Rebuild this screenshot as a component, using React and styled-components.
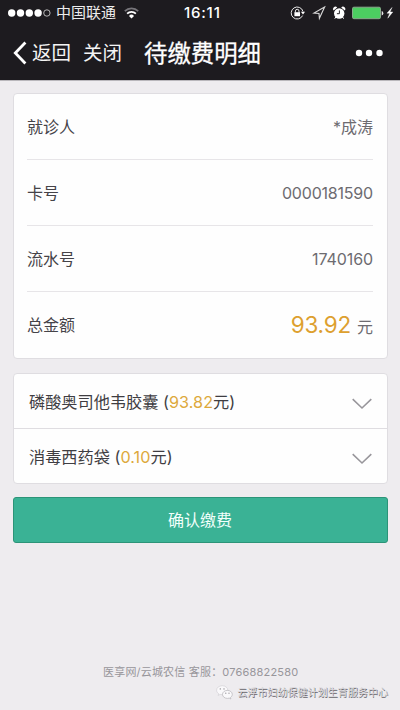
import React from 'react';
import styled, { createGlobalStyle } from 'styled-components';

const GlobalStyle = createGlobalStyle`
  * {
    box-sizing: border-box;
  }
  body {
    margin: 0;
    background: #eeecef;
    font-family: Inter, 'Noto Sans CJK SC', sans-serif;
  }
`;
const Page = styled.div`
  display: flex;
  flex-direction: column;
  width: 400px;
  height: 710px;
  overflow: hidden;
  background: #eeecef;
  white-space: nowrap;
`;
const Header = styled.header`
  height: 81px;
  background: #1d1b1f;
  border-bottom: 1px solid #b9b7bb;
  color: #fff;
`;
const StatusBar = styled.div`
  display: grid;
  grid-template-columns: 176px 52px 1fr;
  align-items: center;
  height: 26px;
  padding: 0 6px 0 8px;
`;
const StatusGroup = styled.div`
  display: flex;
  align-items: center;
  height: 26px;
  justify-content: ${(props) => (props.$end ? 'flex-end' : 'flex-start')};
`;
const Carrier = styled.span`
  margin: 0 8px 0 5px;
  font-size: 15px;
  line-height: 26px;
  color: #ececec;
`;
const Time = styled.span`
  font-size: 15px;
  font-weight: 500;
  line-height: 26px;
  letter-spacing: 0.8px;
`;
const NavBar = styled.nav`
  display: flex;
  align-items: center;
  height: 54px;
  padding: 0 17px 0 13px;
`;
const NavLink = styled.a`
  display: flex;
  align-items: center;
  margin-right: 12px;
  font-size: 19.5px;
  line-height: 54px;
  color: #f4f4f4;
`;
const Title = styled.h1`
  margin: 2px 0 0 10px;
  font-size: 23.4px;
  font-weight: 400;
  line-height: 52px;
  -webkit-text-stroke: 0.3px #fff;
`;
const MoreIcon = styled.svg`
  margin-left: auto;
`;
const Content = styled.main`
  display: flex;
  flex-direction: column;
  flex: 1;
  padding: 12px 12px 0 13px;
`;
const Card = styled.section`
  border: 1px solid #dfdde1;
  border-radius: 4px;
  background: #fefefe;
  margin-bottom: 14px;
`;
const DetailCard = styled(Card)`
  padding: 0 14px 0 13px;
`;
const DetailRow = styled.div`
  display: flex;
  align-items: center;
  justify-content: space-between;
  height: 66px;
  padding-bottom: 1px;
  border-bottom: 1px solid #e7e5e8;
  font-size: 16px;
  &:last-child {
    border-bottom: 0;
    padding-bottom: 2px;
  }
`;
const Label = styled.span`
  color: #454348;
`;
const Value = styled.span`
  color: #6d6b70;
  padding-top: ${(props) => (props.$spacing ? '2px' : '0')};
  letter-spacing: ${(props) => props.$spacing || '0'};
`;
const Total = styled.span`
  font-size: 22.5px;
  letter-spacing: -0.2px;
  color: #dda02f;
  margin-right: 6px;
`;
const Item = styled.div`
  display: flex;
  align-items: center;
  justify-content: space-between;
  height: 54px;
  padding: 0 15px 1px;
  font-size: 16.2px;
  color: #3f3d42;
  & + & {
    height: 55px;
    border-top: 1px solid #dfdde1;
  }
`;
const Price = styled.span`
  color: #dda93c;
  letter-spacing: 0.05px;
`;
const Chevron = styled.svg`
  margin-top: 6px;
`;
const ConfirmButton = styled.button`
  height: 46px;
  margin: -1px 0 0;
  padding: 0 1px 0 0;
  border: 1px solid #2c9478;
  border-radius: 3px;
  background: #3ab295;
  color: #f2fffb;
  font: inherit;
  font-size: 16px;
  line-height: 42px;
`;
const Footer = styled.footer`
  display: flex;
  flex-direction: column;
  height: 48px;
`;
const Contact = styled.div`
  display: flex;
  margin-left: 103px;
  font-size: 11px;
  line-height: 20px;
  letter-spacing: 0.19px;
  color: #98969b;
`;
const Account = styled.div`
  display: flex;
  align-items: center;
  justify-content: flex-end;
  height: 20px;
  padding-right: 12px;
  font-size: 10.05px;
  line-height: 20px;
  color: #d9d7db;
  text-shadow: 0.6px 0.6px 0.4px #66646a;
`;
const AccountIcon = styled.svg`
  margin-right: 4px;
`;

const details = [
  { label: '就诊人', value: '*成涛' },
  { label: '卡号', value: '0000181590', spacing: '-0.2px' },
  { label: '流水号', value: '1740160', spacing: '-0.1px' },
];

const items = [
  { name: '磷酸奥司他韦胶囊', price: '93.82' },
  { name: '消毒西药袋', price: '0.10' },
];

const Signal = () => (
  <svg width="43" height="10" viewBox="0 0 43 10">
    {[3.7, 12.5, 21.3, 30.1].map((x) => (
      <circle key={x} cx={x} cy="5" r="3.7" fill="#fff" />
    ))}
    <circle cx="38.9" cy="5" r="3.2" fill="none" stroke="#ddd" strokeWidth="0.8" />
  </svg>
);

const Wifi = () => (
  <svg width="15" height="12" viewBox="0 0 15 12" fill="none" strokeWidth="1.7">
    <path d="M0.8 4.2a9.5 9.5 0 0 1 13.4 0" stroke="#77757a" />
    <path d="M3.1 6.7a6.2 6.2 0 0 1 8.8 0" stroke="#fff" />
    <path d="M7.5 11.4 5 8.9a3.5 3.5 0 0 1 5 0z" fill="#fff" />
  </svg>
);

const StatusIcons = () => (
  <svg width="124" height="18" viewBox="270 4 124 18">
    <g fill="none" stroke="#e9e9e9" strokeWidth="1">
      <path d="M302.6 15.6A6 6 0 1 1 303 11.5" />
      <path d="M295.4 12.5v-1.4a1.8 1.8 0 0 1 3.6 0v1.4" />
    </g>
    <rect x="294.4" y="12.2" width="5.6" height="4" fill="#fff" />
    <path d="M300.9 11.7h4.2l-2.1 2.7z" fill="#fff" />
    <path d="M324.6 7 314 13.1l5 .3.4 4.9z" fill="none" stroke="#d8d8d8" strokeWidth="1.1" />
    <circle cx="339.2" cy="13.5" r="5.2" fill="#fff" />
    <path d="M333.6 10.6a2.4 2.4 0 0 1 3.6-3.2zM344.8 10.6a2.4 2.4 0 0 0-3.6-3.2z" fill="#fff" />
    <path d="m335.8 17-1 1.7M342.6 17l1 1.7" stroke="#fff" />
    <path d="M339.4 10.4v3.3h-2.5" fill="none" stroke="#29272b" />
    <rect x="352.5" y="7.2" width="28" height="11.5" rx="1.4" fill="#4cce61" stroke="#89a98c" />
    <path d="M381.7 11a2.3 2.3 0 0 1 0 4.4z" fill="#e5e5e5" />
    <path d="m392 7.5-5 5.7h2.7l-1.9 5 5-6.2H390z" fill="#fff" stroke="#fff" strokeWidth="0.4" />
  </svg>
);

const BackArrow = () => (
  <svg width="19" height="24" viewBox="0 0 19 24">
    <path d="M12.4 1.5 2.3 12l10.1 10.5" fill="none" stroke="#fff" strokeWidth="2.8" />
  </svg>
);

const WechatIcon = () => (
  <AccountIcon width="17" height="15" viewBox="0 0 17 15">
    <path
      d="M6.2.7C3 .7.6 2.7.6 5.2c0 1.5.8 2.7 2.1 3.5l-.6 1.8 2-1.1c.7.2 1.4.3 2.1.3 3.1 0 5.6-2 5.6-4.5S9.3.7 6.2.7z"
      fill="#faf9fb"
      stroke="#d3d1d6"
      strokeWidth="0.7"
    />
    <path
      d="M11.4 5.4c-2.8 0-4.9 1.8-4.9 4s2.1 4 4.9 4c.6 0 1.2-.1 1.8-.3l1.7.9-.5-1.5c1.1-.7 1.9-1.8 1.9-3.1 0-2.2-2.2-4-4.9-4z"
      fill="#faf9fb"
      stroke="#b5b3b8"
      strokeWidth="0.7"
    />
    <g fill="#8a888d">
      <circle cx="4.3" cy="3.9" r="0.7" />
      <circle cx="8" cy="3.9" r="0.7" />
      <circle cx="9.8" cy="8.2" r="0.6" />
      <circle cx="13" cy="8.2" r="0.6" />
    </g>
  </AccountIcon>
);

const App = function () {
  return (
    <Page>
      <GlobalStyle />
      <Header>
        <StatusBar>
          <StatusGroup>
            <Signal />
            <Carrier>中国联通</Carrier>
            <Wifi />
          </StatusGroup>
          <Time>16:11</Time>
          <StatusGroup $end>
            <StatusIcons />
          </StatusGroup>
        </StatusBar>
        <NavBar>
          <NavLink>
            <BackArrow />
            返回
          </NavLink>
          <NavLink>关闭</NavLink>
          <Title>待缴费明细</Title>
          <MoreIcon width="28" height="8" viewBox="0 0 28 8" fill="#fff">
            <circle cx="4" cy="4" r="3.2" />
            <circle cx="14" cy="4" r="3.2" />
            <circle cx="24.5" cy="4" r="3.2" />
          </MoreIcon>
        </NavBar>
      </Header>
      <Content>
        <DetailCard>
          {details.map((row) => (
            <DetailRow key={row.label}>
              <Label>{row.label}</Label>
              <Value $spacing={row.spacing}>{row.value}</Value>
            </DetailRow>
          ))}
          <DetailRow>
            <Label>总金额</Label>
            <Value>
              <Total>93.92</Total>
              元
            </Value>
          </DetailRow>
        </DetailCard>
        <Card>
          {items.map((item) => (
            <Item key={item.name}>
              <span>
                {item.name} (<Price>{item.price}</Price>元)
              </span>
              <Chevron width="20" height="12" viewBox="0 0 20 12">
                <path d="M0.7 1.2 10 10l9.3-8.8" fill="none" stroke="#98969b" strokeWidth="1.6" />
              </Chevron>
            </Item>
          ))}
        </Card>
        <ConfirmButton>确认缴费</ConfirmButton>
      </Content>
      <Footer>
        <Contact>医享网/云城农信 客服：07668822580</Contact>
        <Account>
          <WechatIcon />
          云浮市妇幼保健计划生育服务中心
        </Account>
      </Footer>
    </Page>
  );
};

export default App;
